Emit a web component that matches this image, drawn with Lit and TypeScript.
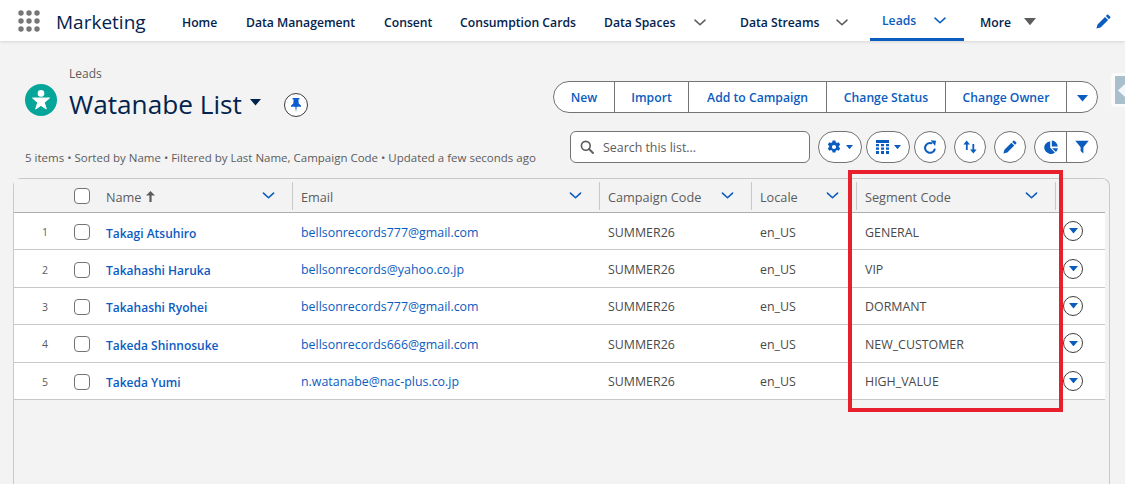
import { LitElement, css, html, svg } from 'lit'
import { customElement } from 'lit/decorators.js'
import { styleMap } from 'lit/directives/style-map.js'

type NavItem = { label: string; width: number; menu?: 'chevron' | 'caret'; active?: boolean }

const navItems: NavItem[] = [
  { label: 'Home', width: 64 },
  { label: 'Data Management', width: 138 },
  { label: 'Consent', width: 76 },
  { label: 'Consumption Cards', width: 144 },
  { label: 'Data Spaces', width: 136, menu: 'chevron' },
  { label: 'Data Streams', width: 130, menu: 'chevron' },
  { label: 'Leads', width: 94, menu: 'chevron', active: true },
  { label: 'More', width: 0, menu: 'caret' },
]

const actions = [
  { label: 'New', width: 61 },
  { label: 'Import', width: 74 },
  { label: 'Add to Campaign', width: 138 },
  { label: 'Change Status', width: 119 },
  { label: 'Change Owner', width: 121 },
]

const leads = [
  ['Takagi Atsuhiro', 'bellsonrecords777@gmail.com', 'GENERAL'],
  ['Takahashi Haruka', 'bellsonrecords@yahoo.co.jp', 'VIP'],
  ['Takahashi Ryohei', 'bellsonrecords777@gmail.com', 'DORMANT'],
  ['Takeda Shinnosuke', 'bellsonrecords666@gmail.com', 'NEW_CUSTOMER'],
  ['Takeda Yumi', 'n.watanabe@nac-plus.co.jp', 'HIGH_VALUE'],
]

const chevron = svg`<svg class="chev" viewBox="0 0 14 8"><path d="M1.2 1.2 7 6.6l5.8-5.4" fill="none" stroke="currentColor" stroke-width="1.8" stroke-linecap="round" stroke-linejoin="round"/></svg>`
const caret = (size: number) =>
  svg`<svg width=${size} height=${size * 0.6} viewBox="0 0 10 6"><path d="M0 0h10L5 6z" fill="currentColor"/></svg>`

const gearIcon = svg`<svg width="14" height="14" viewBox="0 0 14 14"><path fill="currentColor" fill-rule="evenodd" d="M5.6.4h2.8l.4 1.8 1.2.7 1.8-.6 1.4 2.4-1.4 1.2v1.2l1.4 1.2-1.4 2.4-1.8-.6-1.2.7-.4 1.8H5.6l-.4-1.8-1.2-.7-1.8.6L.8 8.3l1.4-1.2V5.9L.8 4.7l1.4-2.4 1.8.6 1.2-.7zM7 4.9a2.1 2.1 0 1 0 0 4.2 2.1 2.1 0 0 0 0-4.2z"/></svg>`
const tableIcon = svg`<svg width="13" height="14" viewBox="0 0 13 14"><path fill="currentColor" d="M0 0h13v3H0zM0 4h3v2.2H0zM5 4h3v2.2H5zM10 4h3v2.2h-3zM0 7.4h3v2.4H0zM5 7.4h3v2.4H5zM10 7.4h3v2.4h-3zM0 11h3v3H0zM5 11h3v3H5zM10 11h3v3h-3z"/></svg>`
const refreshIcon = svg`<svg width="14" height="14" viewBox="0 0 14 14"><path d="M11.6 9.6A4.9 4.9 0 1 1 8.4 3.2" fill="none" stroke="currentColor" stroke-width="2.1" stroke-linecap="round"/><path d="M7.6.2 13 .8l-.9 5.2z" fill="currentColor"/></svg>`
const swapIcon = svg`<svg width="14" height="14" viewBox="0 0 14 14"><path fill="currentColor" d="M3.6.6 7 4.6H4.7V10H2.9V4.6H.4zM10.4 13.4 7 9.4h2.4V4h1.8v5.4h2.4z"/></svg>`
const pencilIcon = (size: number) =>
  svg`<svg width=${size} height=${size} viewBox="0 0 14 14"><path fill="currentColor" d="M10.4.7a.8.8 0 0 1 1.1 0l1.8 1.8a.8.8 0 0 1 0 1.1l-1.2 1.2-2.9-2.9zM8.4 2.7l2.9 2.9-7 7L.4 13.6l1-3.9z"/></svg>`
const pieIcon = svg`<svg width="14" height="14" viewBox="0 0 14 14"><path fill="currentColor" d="M6.2 1.2v6.6l4.7 4.6A6.4 6.4 0 1 1 6.2 1.2zM7.8.6a6.4 6.4 0 0 1 6 6H7.8zM8 8.2h5.8a6.3 6.3 0 0 1-1.8 3.8z"/></svg>`
const filterIcon = svg`<svg width="14" height="14" viewBox="0 0 14 14"><path fill="currentColor" d="M.3.8h13.4L8.4 7.2V13.4L5.6 11V7.2z"/></svg>`

@customElement('app-root')
export class AppRoot extends LitElement {
  static styles = css`
    :host {
      display: block;
      position: relative;
      width: 1125px;
      height: 484px;
      overflow: hidden;
      background: #f3f3f3;
      color: #4a4a4a;
      font-family: 'Open Sans', 'Noto Sans', sans-serif;
      font-size: 12.4px;
    }
    svg {
      display: block;
      flex: none;
    }

    .top {
      display: flex;
      align-items: center;
      height: 41px;
      padding-left: 18px;
      background: #ffffff;
      box-shadow: 0 1px 3px rgba(0, 0, 0, 0.12);
      position: relative;
    }
    .launcher {
      color: #747474;
    }
    .app-name {
      width: 126px;
      margin-left: 16px;
      padding-top: 3px;
      font-size: 19px;
      color: #03234d;
    }
    .nav {
      display: flex;
      height: 41px;
    }
    .nav-item {
      display: flex;
      align-items: center;
      box-sizing: border-box;
      height: 41px;
      padding-top: 3px;
      color: #03234d;
      font-size: 12.2px;
      font-weight: 600;
      white-space: nowrap;
    }
    .nav-label {
      flex: none;
    }
    .nav-item .chev {
      width: 12px;
      height: 7px;
      color: #5c5c5c;
    }
    .nav-item.spaces .nav-label {
      width: 90px;
    }
    .nav-item.streams .nav-label {
      width: 96px;
    }
    .nav-item.active {
      padding-left: 12px;
      color: #0b5cbf;
      border-bottom: 3px solid #0b5cbf;
    }
    .nav-item.active .nav-label {
      width: 52px;
    }
    .nav-item.active .chev {
      color: #0b5cbf;
    }
    .nav-item.more {
      margin-left: 16px;
    }
    .nav-item.more .nav-label {
      width: 44px;
    }
    .nav-item.more svg {
      color: #5c5c5c;
    }
    .edit-nav {
      margin-left: auto;
      margin-right: 14px;
      padding-top: 2px;
      color: #0b5cbf;
    }

    .head {
      display: flex;
      justify-content: space-between;
      height: 137px;
      padding: 0 27px 0 25px;
    }
    .title-area {
      display: flex;
      flex-direction: column;
      padding-top: 25px;
    }
    .crumb {
      margin-left: 44px;
      height: 15px;
      line-height: 15px;
      font-size: 12px;
      color: #5c5c5c;
    }
    .title-row {
      display: flex;
      align-items: center;
      height: 36px;
      margin-top: 1px;
    }
    .title {
      margin-left: 12px;
      padding-top: 8px;
      font-size: 26.2px;
      color: #03234d;
      white-space: nowrap;
    }
    .title-caret {
      margin-left: 8px;
      margin-top: 5px;
      color: #03234d;
    }
    .pin {
      display: flex;
      align-items: center;
      justify-content: center;
      box-sizing: border-box;
      width: 24px;
      height: 24px;
      margin-left: 23px;
      margin-top: 10px;
      border: 1px solid #3e3e3c;
      border-radius: 50%;
      background: #ffffff;
      color: #0b5cd0;
    }
    .summary {
      margin-top: 32px;
      font-size: 11.5px;
      color: #5c5c5c;
      white-space: nowrap;
    }
    .tools {
      display: flex;
      flex-direction: column;
      align-items: flex-end;
      padding-top: 40px;
    }
    .actions,
    .pair {
      display: flex;
      box-sizing: border-box;
      height: 32px;
      border: 1px solid #747474;
      border-radius: 16px;
      background: #ffffff;
      overflow: hidden;
    }
    .actions .seg {
      display: flex;
      align-items: center;
      justify-content: center;
      box-sizing: border-box;
      border-right: 1px solid #747474;
      color: #0b5cbf;
      font-size: 12.2px;
      font-weight: 600;
      white-space: nowrap;
    }
    .actions .more-seg {
      display: flex;
      align-items: center;
      justify-content: center;
      width: 30px;
      color: #0b5cbf;
      padding-top: 3px;
    }
    .list-tools {
      display: flex;
      align-items: center;
      margin-top: 18px;
    }
    .search {
      display: flex;
      align-items: center;
      box-sizing: border-box;
      width: 240px;
      height: 32px;
      margin-right: 8px;
      padding-left: 9px;
      border: 1px solid #747474;
      border-radius: 6px;
      background: #ffffff;
      color: #5c5c5c;
    }
    .search span {
      margin-left: 9px;
    }
    .round,
    .pill {
      display: flex;
      align-items: center;
      justify-content: center;
      box-sizing: border-box;
      height: 32px;
      border: 1px solid #747474;
      border-radius: 16px;
      background: #ffffff;
      color: #0b5cbf;
    }
    .round {
      width: 32px;
      margin-left: 8px;
    }
    .pill {
      width: 44px;
      gap: 5px;
      margin-right: 4px;
    }
    .pill + .round {
      margin-left: 0;
    }
    .pair {
      margin-left: 8px;
      color: #0b5cbf;
    }
    .pair div {
      display: flex;
      align-items: center;
      justify-content: center;
      width: 31px;
    }
    .pair div + div {
      width: 30px;
      border-left: 1px solid #747474;
    }

    .panel {
      box-sizing: border-box;
      width: 1097px;
      height: 320px;
      margin-left: 13px;
      border: 1px solid #c9c9c9;
      border-bottom: none;
      border-radius: 8px 8px 0 0;
      background: #f3f3f3;
    }
    .table {
      width: 1091px;
    }
    .row {
      display: grid;
      grid-template-columns: 60px 32px 186px 307px 152px 105px 199px 50px;
      align-items: center;
      box-sizing: border-box;
      height: 37.4px;
      padding-top: 2px;
      border-bottom: 1px solid #c9c9c9;
      background: #ffffff;
    }
    .row.header {
      height: 34px;
      padding-top: 0;
      border-bottom-color: #aeaeae;
      background: #f3f3f3;
      color: #5c5c5c;
      font-size: 12.7px;
    }
    .num {
      padding-left: 2px;
      text-align: center;
      font-size: 10.5px;
      color: #5c5c5c;
    }
    .check {
      box-sizing: border-box;
      width: 16px;
      height: 16px;
      border: 1px solid #747474;
      border-radius: 4px;
      background: #ffffff;
    }
    .hcell {
      display: flex;
      align-items: center;
      justify-content: space-between;
      box-sizing: border-box;
      height: 28px;
      padding: 0 17px 0 8px;
      border-left: 1px solid #c9c9c9;
      white-space: nowrap;
    }
    .hcell span {
      padding-top: 2px;
    }
    .hcell.first {
      padding-left: 0;
      border-left: none;
    }
    .hcell .chev {
      width: 13px;
      height: 7px;
      color: #0b5cbf;
    }
    .sort {
      display: flex;
      align-items: center;
      gap: 5px;
    }
    .cell {
      padding-left: 9px;
      white-space: nowrap;
    }
    .cell.name {
      padding-left: 0;
      padding-top: 2px;
      color: #0b5cbf;
      font-weight: 600;
      font-size: 12px;
    }
    .cell.email {
      color: #0b5cbf;
    }
    .row-action {
      display: flex;
      align-items: center;
      justify-content: center;
      box-sizing: border-box;
      width: 20px;
      height: 20px;
      margin-left: 8px;
      margin-top: -2px;
      border: 1px solid #3e3e3c;
      border-radius: 50%;
      background: #ffffff;
      color: #0b5cbf;
    }

    .highlight {
      position: absolute;
      left: 848px;
      top: 170px;
      box-sizing: border-box;
      width: 215px;
      height: 242px;
      border: 4px solid #e8202e;
      pointer-events: none;
    }
    .side-tab {
      position: absolute;
      right: 0;
      top: 73px;
      display: flex;
      align-items: center;
      box-sizing: border-box;
      width: 14px;
      height: 34px;
      padding-left: 4px;
      border-radius: 4px 0 0 4px;
      background: #fafafa;
    }
    .side-tab div {
      display: flex;
      align-items: center;
      justify-content: flex-end;
      width: 10px;
      height: 28px;
      background: #a9bfcc;
      color: #f4f7f9;
    }
  `

  renderNavItem(item: NavItem) {
    if (item.menu === 'caret') {
      return html`<div class="nav-item more">
        <span class="nav-label">${item.label}</span>${caret(12)}
      </div>`
    }
    if (!item.menu) {
      return html`<div class="nav-item" style=${styleMap({ width: `${item.width}px` })}>
        <span class="nav-label">${item.label}</span>
      </div>`
    }
    const kind = item.active ? 'active' : item.label === 'Data Spaces' ? 'spaces' : 'streams'
    return html`<div class="nav-item ${kind}" style=${styleMap({ width: `${item.width}px` })}>
      <span class="nav-label">${item.label}</span>${chevron}
    </div>`
  }

  renderHeaderCell(label: string) {
    return html`<div class="hcell"><span>${label}</span>${chevron}</div>`
  }

  render() {
    return html`
      <div class="top">
        <svg class="launcher" width="22" height="22" viewBox="0 0 22 22">
          ${[3, 11, 19].map((y) =>
            [3, 11, 19].map((x) => svg`<circle cx=${x} cy=${y} r="2.7" fill="currentColor" />`)
          )}
        </svg>
        <div class="app-name">Marketing</div>
        <div class="nav">${navItems.map((item) => this.renderNavItem(item))}</div>
        <div class="edit-nav">${pencilIcon(15)}</div>
      </div>

      <div class="head">
        <div class="title-area">
          <div class="crumb">Leads</div>
          <div class="title-row">
            <svg width="32" height="32" viewBox="0 0 32 32">
              <circle cx="16" cy="16" r="16" fill="#06a59a" />
              <circle cx="16" cy="9.4" r="3.3" fill="#fff" />
              <path
                fill="#fff"
                stroke="#fff"
                stroke-linejoin="round"
                d="M7.5 14h17l-5.2 4.6 2 6.4-5.3-3.6-5.3 3.6 2-6.4z"
              />
            </svg>
            <div class="title">Watanabe List</div>
            <div class="title-caret">${caret(11)}</div>
            <div class="pin">
              <svg width="10" height="14" viewBox="0 0 10 14">
                <path
                  fill="currentColor"
                  d="M1.6 0h6.8v1.6H7.3l.5 4.2L10 7.6v1.2H5.7L5 14l-.7-5.2H0V7.6l2.2-1.8.5-4.2H1.6z"
                />
              </svg>
            </div>
          </div>
          <div class="summary">
            5 items • Sorted by Name • Filtered by Last Name, Campaign Code • Updated a few seconds ago
          </div>
        </div>
        <div class="tools">
          <div class="actions">
            ${actions.map(
              (a) => html`<div class="seg" style=${styleMap({ width: `${a.width}px` })}>${a.label}</div>`
            )}
            <div class="more-seg">${caret(11)}</div>
          </div>
          <div class="list-tools">
            <div class="search">
              <svg width="14" height="14" viewBox="0 0 14 14">
                <circle cx="5.8" cy="5.8" r="4.4" fill="none" stroke="#5c5c5c" stroke-width="1.6" />
                <path d="M9 9l4 4" stroke="#5c5c5c" stroke-width="1.8" stroke-linecap="round" />
              </svg>
              <span>Search this list...</span>
            </div>
            <div class="pill">${gearIcon}${caret(7)}</div>
            <div class="pill">${tableIcon}${caret(7)}</div>
            <div class="round">${refreshIcon}</div>
            <div class="round">${swapIcon}</div>
            <div class="round">${pencilIcon(14)}</div>
            <div class="pair">
              <div>${pieIcon}</div>
              <div>${filterIcon}</div>
            </div>
          </div>
        </div>
      </div>

      <div class="panel">
        <div class="table">
          <div class="row header">
            <div></div>
            <div class="check"></div>
            <div class="hcell first">
              <span class="sort">Name
                <svg width="9" height="11" viewBox="0 0 9 11">
                  <path fill="#5c5c5c" d="M4.5 0 9 4.6H5.6V11H3.4V4.6H0z" />
                </svg>
              </span>${chevron}
            </div>
            ${this.renderHeaderCell('Email')}
            ${this.renderHeaderCell('Campaign Code')}
            ${this.renderHeaderCell('Locale')}
            ${this.renderHeaderCell('Segment Code')}
            <div class="hcell"></div>
          </div>
          ${leads.map(
            ([name, email, segment], i) => html`
              <div class="row">
                <div class="num">${i + 1}</div>
                <div class="check"></div>
                <div class="cell name">${name}</div>
                <div class="cell email">${email}</div>
                <div class="cell">SUMMER26</div>
                <div class="cell">en_US</div>
                <div class="cell">${segment}</div>
                <div class="row-action">${caret(9)}</div>
              </div>
            `
          )}
        </div>
      </div>

      <div class="highlight"></div>
      <div class="side-tab">
        <div>
          <svg width="7" height="13" viewBox="0 0 7 13"><path fill="currentColor" d="M7 0v13L0 6.5z" /></svg>
        </div>
      </div>
    `
  }
}
